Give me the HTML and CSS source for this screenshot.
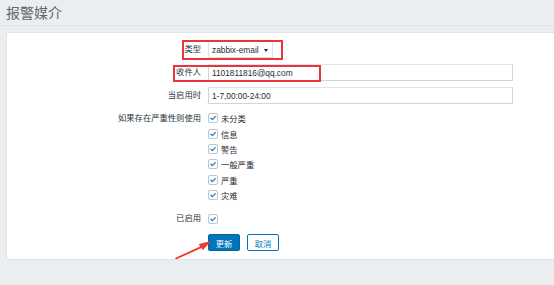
FILE: index.html
```html
<!DOCTYPE html>
<html lang="zh">
<head>
<meta charset="utf-8">
<title>报警媒介</title>
<link rel="stylesheet" href="styles.css">
</head>
<body>
<header class="page-header">
  <h1 class="page-title">报警媒介</h1>
</header>
<main class="panel">
  <form class="form">
    <div class="row row-first">
      <label class="label">类型</label>
      <div class="field">
        <div class="select">
          <span class="select-text">zabbix-email</span>
          <span class="select-arrow"></span>
        </div>
      </div>
    </div>
    <div class="row">
      <label class="label">收件人</label>
      <div class="field"><div class="input">1101811816@qq.com</div></div>
    </div>
    <div class="row">
      <label class="label">当启用时</label>
      <div class="field"><div class="input">1-7,00:00-24:00</div></div>
    </div>
    <div class="row row-check">
      <label class="label label-top">如果存在严重性则使用</label>
      <div class="field checklist">
        <div class="check-item"><span class="checkbox"><svg viewBox="0 0 10 10"><polyline points="2.3,5.2 4.3,7 7.8,3.2"/></svg></span><span>未分类</span></div>
        <div class="check-item"><span class="checkbox"><svg viewBox="0 0 10 10"><polyline points="2.3,5.2 4.3,7 7.8,3.2"/></svg></span><span>信息</span></div>
        <div class="check-item"><span class="checkbox"><svg viewBox="0 0 10 10"><polyline points="2.3,5.2 4.3,7 7.8,3.2"/></svg></span><span>警告</span></div>
        <div class="check-item"><span class="checkbox"><svg viewBox="0 0 10 10"><polyline points="2.3,5.2 4.3,7 7.8,3.2"/></svg></span><span>一般严重</span></div>
        <div class="check-item"><span class="checkbox"><svg viewBox="0 0 10 10"><polyline points="2.3,5.2 4.3,7 7.8,3.2"/></svg></span><span>严重</span></div>
        <div class="check-item"><span class="checkbox"><svg viewBox="0 0 10 10"><polyline points="2.3,5.2 4.3,7 7.8,3.2"/></svg></span><span>灾难</span></div>
      </div>
    </div>
    <div class="row row-check row-enabled">
      <label class="label">已启用</label>
      <div class="field checklist">
        <div class="check-item"><span class="checkbox"><svg viewBox="0 0 10 10"><polyline points="2.3,5.2 4.3,7 7.8,3.2"/></svg></span></div>
      </div>
    </div>
    <div class="row row-buttons">
      <span class="label"></span>
      <div class="field buttons">
        <button type="button" class="btn btn-primary">更新</button>
        <button type="button" class="btn btn-alt">取消</button>
      </div>
    </div>
  </form>
  <div class="mark mark-type"></div>
  <div class="mark mark-recipient"></div>
  <svg class="arrow" viewBox="0 0 40 24" width="40" height="24">
    <polygon points="1,22 26,10.5 25,8 37,5 29,14 27.5,12 2,23.5"/>
  </svg>
</main>
</body>
</html>
```

FILE: styles.css
```css
* { box-sizing: border-box; }

html, body {
  margin: 0;
  padding: 0;
}

body {
  background: #ebeef0;
  width: 554px;
  height: 285px;
  overflow: hidden;
  font-family: "Liberation Sans", "Noto Sans CJK SC", sans-serif;
  font-size: 8.3px;
  color: #1f2c33;
}

.page-header {
  height: 26px;
  border-bottom: 1px solid #dfe3e6;
  padding-left: 6px;
  display: flex;
  align-items: center;
}

.page-title {
  margin: 0;
  font-family: "Noto Sans CJK SC", sans-serif;
  font-weight: normal;
  font-size: 14px;
  line-height: 1;
  color: #60666a;
  letter-spacing: 0;
  position: relative;
  top: -1px;
}

.panel {
  position: relative;
  margin: 6px 0 0 6px;
  background: #fff;
  border: 1px solid #e0e4e7;
  border-right: none;
  height: 228px;
  padding-top: 8px;
}

.form {
  display: flex;
  flex-direction: column;
}

.row {
  display: grid;
  grid-template-columns: 194px 1fr;
  column-gap: 7px;
  align-items: center;
  margin-top: 6px;
}

.row-first { margin-top: 0; }

.label {
  text-align: right;
  white-space: nowrap;
  color: #2a363c;
  line-height: 17px;
}

.label-top {
  align-self: start;
  line-height: 15.4px;
}

.field {
  display: flex;
}

.select {
  width: 65px;
  height: 17px;
  border: 1px solid #dce2e5;
  background: #fff;
  display: flex;
  align-items: center;
  padding-left: 3px;
  position: relative;
}

.select-text {
  white-space: nowrap;
}

.select-arrow {
  position: absolute;
  left: 55px;
  top: 6.5px;
  width: 0;
  height: 0;
  border-left: 2.5px solid transparent;
  border-right: 2.5px solid transparent;
  border-top: 3.5px solid #1f2c33;
}

.input {
  width: 305px;
  height: 17px;
  border: 1px solid #cfd6d9;
  border-top-color: #e1e5e7;
  background: #fff;
  padding-left: 3px;
  display: flex;
  align-items: center;
  white-space: nowrap;
}

.row-check {
  margin-top: 6.5px;
}

.row-enabled {
  margin-top: 7.5px;
}

.checklist {
  flex-direction: column;
}

.check-item {
  height: 15.4px;
  display: flex;
  align-items: center;
  gap: 3px;
  white-space: nowrap;
}

.checkbox {
  width: 10px;
  height: 10px;
  border: 1px solid #bcc7cd;
  border-radius: 2px;
  background: #fff;
  display: inline-flex;
  flex: none;
}

.checkbox svg {
  width: 100%;
  height: 100%;
  fill: none;
  stroke: #1a7fc9;
  stroke-width: 1.6;
  stroke-linecap: round;
  stroke-linejoin: round;
}

.row-buttons {
  margin-top: 7px;
}

.buttons {
  gap: 7px;
}

.btn {
  height: 17px;
  width: 32px;
  padding: 0;
  margin: 0;
  font-family: "Noto Sans CJK SC", "Liberation Sans", sans-serif;
  font-size: 8.3px;
  line-height: 1;
  border-radius: 2px;
  cursor: pointer;
}

.btn-primary {
  background: #0275b8;
  border: 1px solid #0265a0;
  color: #fff;
}

.btn-alt {
  background: #fff;
  border: 1px solid #0275b8;
  color: #0275b8;
}

.mark {
  position: absolute;
  border: 2px solid #ec3339;
  pointer-events: none;
}

.mark-type {
  left: 174.5px;
  top: 7px;
  width: 101px;
  height: 19.5px;
}

.mark-recipient {
  left: 165.5px;
  top: 31.5px;
  width: 148px;
  height: 17.5px;
}

.arrow {
  position: absolute;
  left: 167px;
  top: 203px;
  fill: #ee3a30;
}
```
